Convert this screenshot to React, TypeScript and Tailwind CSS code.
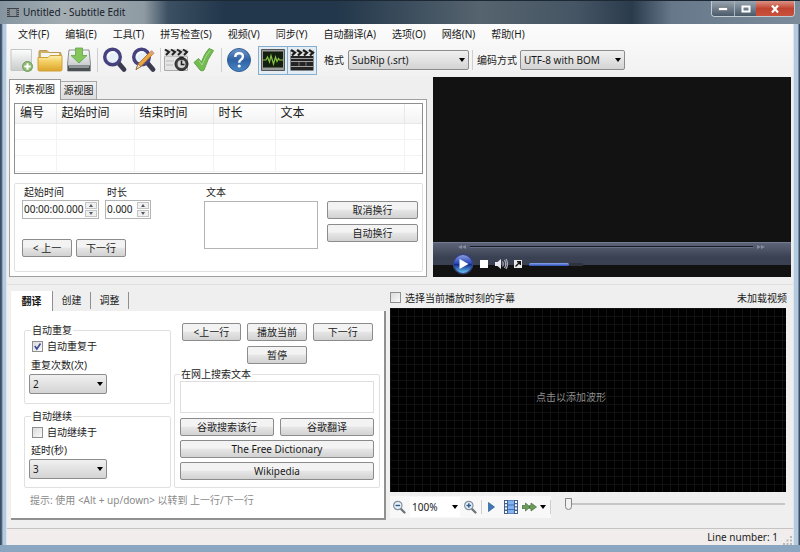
import { useState } from 'react';
import type { ReactNode } from 'react';
import clsx from 'clsx';

const MENUS = [
  '文件(F)',
  '编辑(E)',
  '工具(T)',
  '拼写检查(S)',
  '视频(V)',
  '同步(Y)',
  '自动翻译(A)',
  '选项(O)',
  '网络(N)',
  '帮助(H)',
];

const TABS = ['翻译', '创建', '调整'];

/* ---------- icons ---------- */

function NewIcon() {
  return (
    <svg width="24" height="26" viewBox="0 0 24 26">
      <defs>
        <linearGradient id="page" x1="0" y1="0" x2="0" y2="1">
          <stop offset="0" stopColor="#fdfdfd" />
          <stop offset="1" stopColor="#c9ccca" />
        </linearGradient>
      </defs>
      <path d="M1 2.500h20.500v21H1z" fill="url(#page)" stroke="#c3c7c3" />
      <circle cx="17.500" cy="19.500" r="5" fill="#8fb873" stroke="#6f9f5a" />
      <path d="M17.500 16.300v6.400M14.300 19.500h6.400" stroke="#fff" strokeWidth="2" />
    </svg>
  );
}

function OpenIcon() {
  return (
    <svg width="26" height="26" viewBox="0 0 26 26">
      <defs>
        <linearGradient id="folder" x1="0" y1="0" x2="0" y2="1">
          <stop offset="0" stopColor="#fdf0b4" />
          <stop offset="0.400" stopColor="#f3cf62" />
          <stop offset="1" stopColor="#dca42c" />
        </linearGradient>
      </defs>
      <path d="M2 10V4.500q0-1 1-1h7l2 2h11q1 0 1 1V12H2z" fill="#cdb065" stroke="#b89a55" />
      <path d="M4 6h18v6H4z" fill="#f4f4f0" />
      <path d="M1 10.500h10l2-2h12v14q0 1.500-1.500 1.500h-21Q1 24 1 22.500z" fill="url(#folder)" stroke="#cfa03a" />
    </svg>
  );
}

function SaveIcon() {
  return (
    <svg width="26" height="26" viewBox="0 0 26 26">
      <defs>
        <linearGradient id="drive" x1="0" y1="0" x2="0" y2="1">
          <stop offset="0" stopColor="#fafafa" />
          <stop offset="1" stopColor="#b8bcbf" />
        </linearGradient>
      </defs>
      <path d="M3 3h20l1.500 14v7h-23v-7z" fill="url(#drive)" stroke="#8c9092" />
      <path d="M2 18.500h22V24H2z" fill="#4b5053" />
      <path d="M3 19h20v2H3z" fill="#8f9598" />
      <path d="M9.500 1h7v7.500H21L13 16 5 8.500h4.500z" fill="#84c65c" stroke="#5fa343" strokeWidth="0.800" />
    </svg>
  );
}

function Lens() {
  return (
    <>
      <path d="M16 15.500l6 7" stroke="#3c3a50" strokeWidth="4.800" strokeLinecap="round" />
      <circle cx="10.500" cy="10" r="7.800" fill="#e7eff8" stroke="#46427e" strokeWidth="3.400" />
      <path d="M6 9.500a5 5 0 0 1 7-4" fill="none" stroke="#fff" strokeWidth="1.600" />
    </>
  );
}

function FindIcon() {
  return (
    <svg width="26" height="26" viewBox="0 0 26 26">
      <Lens />
    </svg>
  );
}

function ReplaceIcon() {
  return (
    <svg width="26" height="26" viewBox="0 0 26 26">
      <Lens />
      <path d="M5 22.500L7 17 19.500 4.500q2-1 3.500 1.500L10 19.500z" fill="#eba643" stroke="#a86d22" strokeWidth="0.800" />
      <path d="M5 22.500L7 17l3 2.500z" fill="#f7dfb6" stroke="#6b512e" strokeWidth="0.600" />
      <path d="M18.500 5.500l3.500 2.500 1.500-2-3-3z" fill="#d9a08a" />
    </svg>
  );
}

function ClapClockIcon() {
  return (
    <svg width="26" height="26" viewBox="0 0 26 26">
      <path d="M1.500 9.500h23v14h-23z" fill="#e4e4e4" stroke="#aaa" />
      <path d="M1.500 2h23v7.500h-23z" fill="#d8d8d8" />
      <path d="M2 2.500l4 2.500-3 3M8 2.500L12 5 9 8M14 2.500L18 5l-3 3M20 2.500L24 5l-3 3" fill="none" stroke="#222" strokeWidth="2" />
      <path d="M3 14h8M3 18h7" stroke="#bbb" />
      <circle cx="18.500" cy="17" r="6.500" fill="#3c3c3c" stroke="#222" />
      <circle cx="18.500" cy="17" r="4" fill="#d6d6d6" />
      <path d="M18.500 13.500v4h3" stroke="#222" strokeWidth="1.600" fill="none" />
      <path d="M16.500 10.500h4" stroke="#222" strokeWidth="2" />
    </svg>
  );
}

function CheckIcon() {
  return (
    <svg width="22" height="26" viewBox="0 0 22 26">
      <path d="M1 15.500l4.500-4 3 3.500Q11 7 16 1.500l4.500 2Q14.500 12 11 23q-2 1.800-4 0z" fill="#74bb52" stroke="#62a645" />
      <path d="M17 3.500Q12 9 9 18L5.800 13.500" fill="none" stroke="#a4d888" />
    </svg>
  );
}

function HelpIcon() {
  return (
    <svg width="26" height="26" viewBox="0 0 26 26">
      <defs>
        <linearGradient id="help" x1="0" y1="0" x2="0" y2="1">
          <stop offset="0" stopColor="#6d97c9" />
          <stop offset="0.500" stopColor="#2e62a3" />
          <stop offset="1" stopColor="#4a86c4" />
        </linearGradient>
      </defs>
      <circle cx="13" cy="13" r="11.500" fill="url(#help)" stroke="#345f92" />
      <path d="M9.300 10q0-3.800 3.800-3.800t3.800 3.300q0 2-2 3.200-1.700 1-1.700 3" fill="none" stroke="#fff" strokeWidth="2.400" />
      <circle cx="13.200" cy="19" r="1.600" fill="#fff" />
    </svg>
  );
}

function WaveIcon() {
  return (
    <svg width="26" height="24" viewBox="0 0 26 24">
      <path d="M1.500 1.500h23v21h-23z" fill="#9a9d9c" stroke="#555" />
      <path d="M3 3.500h20v16H3z" fill="#14200f" />
      <path d="M3 12h3l1.500-3 2 5L11 7.500l2.500 8.500 2-7 1.500 4.500 1.500-3 1 1.500H23" fill="none" stroke="#86c245" strokeWidth="1.200" />
    </svg>
  );
}

function ClapIcon() {
  return (
    <svg width="26" height="24" viewBox="0 0 26 24">
      <path d="M1.500 2h23v20.500h-23z" fill="#242424" />
      <path d="M1.500 1.500h23v6.500h-23z" fill="#e2e2e2" />
      <path d="M2 2l4 2.600-3 2.900M8 2l4 2.600-3 2.900M14 2l4 2.600-3 2.900M20 2l4 2.600-3 2.900" fill="none" stroke="#1b1b1b" strokeWidth="2.200" />
      <path d="M2 10.500h22M2 13.500h22M2 18.500h22" stroke="#a2a2a2" />
      <path d="M10 14v4M17 14v4" stroke="#777" />
    </svg>
  );
}

function ZoomGlyph({ plus }: { plus?: boolean }) {
  return (
    <svg width="14" height="14" viewBox="0 0 14 14">
      <path d="M9 9l3.500 3.500" stroke="#6b7178" strokeWidth="2.200" strokeLinecap="round" />
      <circle cx="5.800" cy="5.500" r="4.200" fill="#e6f1f8" stroke="#84919c" strokeWidth="1.200" />
      <path d={plus ? 'M3.500 5.500h4.600M5.800 3.200v4.600' : 'M3.500 5.500h4.600'} stroke="#2b5a8c" strokeWidth="1.400" />
    </svg>
  );
}

function Caret({ className }: { className?: string }) {
  return (
    <svg width="6" height="4" viewBox="0 0 6 4" className={className}>
      <path d="M0 0h6L3 4z" fill="#000" />
    </svg>
  );
}

/* ---------- controls ---------- */

function Button({ children, className }: { children: ReactNode; className?: string }) {
  return (
    <button
      type="button"
      className={clsx(
        'flex h-[18px] items-center justify-center whitespace-nowrap rounded-xs border border-[#8c8c8c] bg-linear-to-b from-[#f3f3f3] from-45% via-[#e6e6e6] via-50% to-[#d2d2d2]',
        className,
      )}
    >
      {children}
    </button>
  );
}

interface SelectProps {
  id: string;
  options: string[];
  className?: string;
}

function Select({ id, options, className }: SelectProps) {
  return (
    <span className={clsx('relative block h-5', className)}>
      <select
        id={id}
        className="block h-full w-full appearance-none rounded-xs border border-[#8c8c8c] bg-linear-to-b from-[#f0f0f0] to-[#d4d4d4] pr-4 pl-[3px]"
      >
        {options.map((o) => (
          <option key={o}>{o}</option>
        ))}
      </select>
      <Caret className="pointer-events-none absolute top-2 right-1" />
    </span>
  );
}

function Spinner({ id, value, className }: { id: string; value: string; className?: string }) {
  return (
    <span className={clsx('flex h-[19px] items-center border border-[#b4b4b4] bg-[#fdfdfd] pr-px', className)}>
      <input id={id} defaultValue={value} className="w-0 min-w-0 flex-1 pl-px outline-none" />
      <span className="flex w-3 flex-col gap-px">
        <button type="button" aria-label="增加" className="flex h-[7px] items-center justify-center border border-[#c4c4c4] bg-[#f0f0f0]">
          <svg width="4" height="3" viewBox="0 0 4 3"><path d="M0 3h4L2 0z" fill="#556" /></svg>
        </button>
        <button type="button" aria-label="减少" className="flex h-[7px] items-center justify-center border border-[#c4c4c4] bg-[#f0f0f0]">
          <svg width="4" height="3" viewBox="0 0 4 3"><path d="M0 0h4L2 3z" fill="#556" /></svg>
        </button>
      </span>
    </span>
  );
}

function CheckBox({ id, checked = false, children }: { id: string; checked?: boolean; children: ReactNode }) {
  const [on, setOn] = useState(checked);
  return (
    <label htmlFor={id} className="flex items-center gap-1">
      <span className="relative block size-[11px]">
        <input
          id={id}
          type="checkbox"
          checked={on}
          onChange={(e) => setOn(e.target.checked)}
          className="block size-[11px] appearance-none border border-[#8e8f8f] bg-linear-to-br from-[#dcdcdc] to-[#fafafa]"
        />
        {on && (
          <svg width="11" height="11" viewBox="0 0 11 11" className="pointer-events-none absolute inset-0">
            <path d="M2.800 5l2 3L8.500 2.500" fill="none" stroke="#3b4a94" strokeWidth="1.600" />
          </svg>
        )}
      </span>
      {children}
    </label>
  );
}

function Divider({ className }: { className?: string }) {
  return <span className={clsx('w-px bg-[#cfcfcf]', className)} />;
}

/* ---------- window parts ---------- */

function TitleBar() {
  return (
    <header className="flex h-6 items-center border-t border-[#1c2833] bg-[linear-gradient(to_right,#8595a0,#a3adb2_8%,#8f9ba3_18%,#3c5063_21%,#22374b_28%,#22374b_42%,#56646f_60%,#465564_72%,#2a3b4c_79%,#66788a_84%,#7b8b9a)] pl-[7px]">
      <svg width="12" height="9" viewBox="0 0 12 9">
        <path d="M0 0h12v9H0z" fill="#3d4348" />
        <path d="M2.500 1h7v7h-7z" fill="#8b9298" />
        <path d="M1 1v7M11 1v7" stroke="#ccc" strokeDasharray="1 1" />
      </svg>
      <h1 className="ml-1 text-[#16202a]">Untitled - Subtitle Edit</h1>
      <div className="mr-[5px] ml-auto flex h-4 self-start overflow-hidden rounded-b-sm border border-t-0 border-[#c3cbd2]">
        <button type="button" aria-label="最小化" className="flex w-[23px] items-center justify-center border-r border-[#aab4bd] bg-linear-to-b from-[#9aa6b1] to-[#4b5a69]">
          <svg width="10" height="4" viewBox="0 0 10 4"><path d="M.5 .5h9v3h-9z" fill="#fff" stroke="#555" strokeWidth="0.500" /></svg>
        </button>
        <button type="button" aria-label="最大化" className="flex w-[21px] items-center justify-center bg-linear-to-b from-[#9aa6b1] to-[#4b5a69]">
          <svg width="10" height="8" viewBox="0 0 10 8"><path d="M1.500 1.500h7v5h-7z" fill="none" stroke="#fff" strokeWidth="2" /></svg>
        </button>
        <button type="button" aria-label="关闭" className="flex w-[38px] items-center justify-center bg-linear-to-b from-[#dc9184] via-[#c04431] via-50% to-[#c9523c]">
          <svg width="10" height="8" viewBox="0 0 10 8"><path d="M2 .5l6 7M8 .5l-6 7" stroke="#fff" strokeWidth="2.200" /></svg>
        </button>
      </div>
    </header>
  );
}

function Toolbar() {
  return (
    <div className="flex h-8 items-center pl-[3px]">
      <button type="button" aria-label="新建"><NewIcon /></button>
      <button type="button" aria-label="打开" className="ml-[3px]"><OpenIcon /></button>
      <button type="button" aria-label="保存" className="ml-[3px]"><SaveIcon /></button>
      <Divider className="mr-1 ml-[5px] h-6" />
      <button type="button" aria-label="查找"><FindIcon /></button>
      <button type="button" aria-label="替换" className="ml-[3px]"><ReplaceIcon /></button>
      <Divider className="mr-0.5 ml-[3px] h-6" />
      <button type="button" aria-label="视觉同步"><ClapClockIcon /></button>
      <button type="button" aria-label="拼写检查" className="ml-1"><CheckIcon /></button>
      <Divider className="mr-1 ml-1.5 h-6" />
      <button type="button" aria-label="帮助"><HelpIcon /></button>
      <button type="button" aria-label="波形" aria-pressed="true" className="ml-1.5 flex h-[29px] w-[30px] items-center justify-center border border-[#86aecd] bg-[#e2ecf4]">
        <WaveIcon />
      </button>
      <button type="button" aria-label="视频" aria-pressed="true" className="-ml-px flex h-[29px] w-[30px] items-center justify-center border border-[#86aecd] bg-[#e2ecf4]">
        <ClapIcon />
      </button>
      <label htmlFor="format" className="ml-[7px] w-6">格式</label>
      <Select id="format" options={['SubRip (.srt)', 'WebVTT (.vtt)']} className="w-[121px]" />
      <Divider className="mr-1 ml-[3px] h-5" />
      <label htmlFor="encoding" className="w-[43px]">编码方式</label>
      <Select id="encoding" options={['UTF-8 with BOM', 'UTF-8']} className="w-[105px]" />
    </div>
  );
}

function ListView() {
  return (
    <section className="flex flex-col pt-0.5">
      <div role="tablist" className="flex items-end">
        <button type="button" role="tab" aria-selected="true" className="z-10 -mb-px h-[21px] w-[52px] border border-b-0 border-[#999] bg-white pb-0.5">
          列表视图
        </button>
        <button type="button" role="tab" aria-selected="false" className="h-[18px] w-9 border border-b-0 border-l-0 border-[#a8a8a8] bg-linear-to-b from-[#f0f0f0] to-[#dcdcdc]">
          源视图
        </button>
      </div>
      <div className="flex flex-1 flex-col gap-[9px] border border-[#a0a0a0] bg-white pt-[3px] pr-[3px] pb-1 pl-1">
        <div className="h-[71px] border border-[#8f8f8f] bg-white">
          <table className="w-full table-fixed border-collapse text-left text-xs">
            <colgroup>
              <col className="w-[41px]" />
              <col className="w-[78px]" />
              <col className="w-[79px]" />
              <col className="w-[62px]" />
              <col />
              <col className="w-[18px]" />
            </colgroup>
            <thead>
              <tr className="h-[19px] bg-linear-to-b from-white to-[#f3f3f3]">
                {['编号', '起始时间', '结束时间', '时长', '文本', ''].map((h) => (
                  <th key={h} className="border-r border-b border-[#e8e8e8] py-0 pl-[5px] leading-4 font-normal last:border-r-0">
                    {h}
                  </th>
                ))}
              </tr>
            </thead>
            <tbody>
              {[0, 1, 2].map((row) => (
                <tr key={row} className="h-4">
                  {[0, 1, 2, 3, 4, 5].map((col) => (
                    <td key={col} className="border-r border-b border-[#f3f3f3] p-0 last:border-r-0" />
                  ))}
                </tr>
              ))}
            </tbody>
          </table>
        </div>
        <div className="flex flex-1 justify-between rounded-xs border border-[#e0e0e0] pr-1 pb-3.5 pl-[7px]">
          <div className="flex flex-col">
            <div className="flex gap-1.5">
              <div className="flex flex-col">
                <label htmlFor="start" className="h-4 pl-0.5 leading-4">起始时间</label>
                <Spinner id="start" value="00:00:00.000" className="w-[77px]" />
              </div>
              <div className="flex flex-col">
                <label htmlFor="duration" className="h-4 pl-0.5 leading-4">时长</label>
                <Spinner id="duration" value="0.000" className="w-[46px]" />
              </div>
            </div>
            <div className="mt-auto flex gap-1">
              <Button className="w-[50px]">&lt; 上一</Button>
              <Button className="w-[50px]">下一行</Button>
            </div>
          </div>
          <div className="flex gap-[9px]">
            <div className="flex flex-col">
              <label htmlFor="text" className="h-[17px] pl-0.5 leading-4">文本</label>
              <textarea id="text" className="h-12 w-[114px] resize-none border border-[#b4b4b4] bg-white" />
            </div>
            <div className="flex flex-col gap-[5px] pt-[17px]">
              <Button className="w-[91px]">取消换行</Button>
              <Button className="w-[91px]">自动换行</Button>
            </div>
          </div>
        </div>
      </div>
    </section>
  );
}

function VideoPlayer() {
  return (
    <section className="flex flex-col bg-[#121212]">
      <div className="flex-1" />
      <div className="flex h-[35px] flex-col border-t border-[#727b93] bg-linear-to-b from-[#5d6478] to-[#3a4152] to-65% [background-size:100%_22px] bg-no-repeat pr-[26px] pl-[25px]">
        <div className="flex h-2 items-center gap-1">
          <svg width="8" height="4" viewBox="0 0 8 4"><path d="M4 0v4L0 2zM8 0v4L4 2z" fill="#858ca0" /></svg>
          <span className="h-0.5 flex-1 border-t border-[#161b2a] bg-[#6a7288]" />
          <svg width="8" height="4" viewBox="0 0 8 4"><path d="M0 0v4l4-2zM4 0v4l4-2z" fill="#858ca0" /></svg>
        </div>
        <div className="-ml-[7px] flex h-[26px] items-center pl-px">
          <button type="button" aria-label="播放">
            <svg width="22" height="22" viewBox="0 0 22 22">
              <defs>
                <linearGradient id="play" x1="0" y1="0" x2="0" y2="1">
                  <stop offset="0" stopColor="#93a4e4" />
                  <stop offset="0.480" stopColor="#2545b5" />
                  <stop offset="0.520" stopColor="#102a8c" />
                  <stop offset="1" stopColor="#6fd4fa" />
                </linearGradient>
              </defs>
              <circle cx="11" cy="11" r="9.700" fill="url(#play)" stroke="#35427c" strokeWidth="1.400" />
              <path d="M7.500 6l9 5-9 5z" fill="#fff" />
            </svg>
          </button>
          <button type="button" aria-label="停止" className="ml-1.5 size-2 bg-white" />
          <button type="button" aria-label="静音" className="ml-[7px]">
            <svg width="13" height="12" viewBox="0 0 13 12">
              <path d="M0 4h2.500L6 1v10L2.500 8H0z" fill="#e8e8ee" />
              <path d="M7.500 3.500q1.500 2.500 0 5M9.500 2q2.500 4 0 8M11 1q3 5 0 10" fill="none" stroke="#aab" strokeWidth="1.200" />
            </svg>
          </button>
          <button type="button" aria-label="全屏" className="ml-1.5">
            <svg width="8" height="8" viewBox="0 0 8 8">
              <path d="M0 0h8v8H0z" fill="#e9e9e9" />
              <path d="M1.500 6.500l4.500-4.500M3 1.700h3.300V5" fill="none" stroke="#111" strokeWidth="1.400" />
            </svg>
          </button>
          <span className="ml-[7px] flex h-[3px] w-[54px] bg-[#30333d]">
            <span className="w-10 rounded-sm bg-linear-to-b from-[#8ca6ea] to-[#2a4cb5]" />
          </span>
        </div>
      </div>
    </section>
  );
}

function TranslatePanel() {
  const [tab, setTab] = useState(TABS[0]);
  return (
    <section className="flex flex-col">
      <div role="tablist" className="flex h-5 items-stretch">
        {TABS.map((t) => (
          <button
            key={t}
            type="button"
            role="tab"
            aria-selected={tab === t}
            onClick={() => setTab(t)}
            className={clsx(
              'w-[38px] border-r border-[#8f8f8f] first:w-[42px]',
              tab === t ? 'bg-white font-bold' : 'mt-px mb-0.5',
            )}
          >
            {t}
          </button>
        ))}
      </div>
      <div className="flex flex-1 flex-col border-r-2 border-b-2 border-[#909090] bg-white pr-1 pl-[13px]">
        <div className="flex gap-[3px] pt-3">
          <div className="flex w-[147px] flex-col gap-[5px]">
            <fieldset className="h-[81px] rounded-xs border border-[#e0e0e0] pl-1">
              <legend className="ml-0.5 h-3.5 px-px leading-3.5">自动重复</legend>
              <div className="pl-[3px] leading-[18px]">
                <CheckBox id="repeat" checked>自动重复于</CheckBox>
              </div>
              <label htmlFor="repeat-count" className="block h-[19px] pl-0.5 leading-5">重复次数(次)</label>
              <Select id="repeat-count" options={['2', '3', '4']} className="w-[78px]" />
            </fieldset>
            <fieldset className="h-[79px] rounded-xs border border-[#e0e0e0] pl-1">
              <legend className="ml-0.5 h-3.5 px-px leading-3.5">自动继续</legend>
              <div className="pl-[3px] leading-[18px]">
                <CheckBox id="continue">自动继续于</CheckBox>
              </div>
              <label htmlFor="delay" className="block h-[18px] pl-0.5 leading-[18px]">延时(秒)</label>
              <Select id="delay" options={['3', '4', '5']} className="w-[78px]" />
            </fieldset>
          </div>
          <div className="flex flex-1 flex-col">
            <div className="grid w-[191px] grid-cols-3 gap-x-1.5 gap-y-[5px] self-center">
              <Button>&lt;上一行</Button>
              <Button>播放当前</Button>
              <Button>下一行</Button>
              <Button className="col-start-2">暂停</Button>
            </div>
            <fieldset className="mt-[3px] flex h-[121px] flex-col rounded-xs border border-[#e0e0e0] px-[5px]">
              <legend className="h-3.5 px-px leading-3.5">在网上搜索文本</legend>
              <textarea aria-label="在网上搜索文本" className="h-8 resize-none border border-[#dedede]" />
              <div className="mt-[5px] grid grid-cols-2 gap-x-1.5 gap-y-1">
                <Button>谷歌搜索该行</Button>
                <Button>谷歌翻译</Button>
                <Button className="col-span-2">The Free Dictionary</Button>
                <Button className="col-span-2">Wikipedia</Button>
              </div>
            </fieldset>
          </div>
        </div>
        <p className="mt-1 pb-2 pl-1.5 leading-4 text-[#8a8a8a]">
          提示: 使用 &lt;Alt + up/down&gt; 以转到 上一行/下一行
        </p>
      </div>
    </section>
  );
}

function WaveformPanel() {
  return (
    <section className="flex min-w-0 flex-col">
      <div className="flex h-[17px] items-center justify-between pr-1 pb-1 leading-4">
        <CheckBox id="follow">选择当前播放时刻的字幕</CheckBox>
        <span>未加载视频</span>
      </div>
      <div className="mr-[5px] flex flex-1 items-center justify-center bg-black bg-[linear-gradient(to_right,#121212_1px,transparent_1px),linear-gradient(to_bottom,#101010_1px,transparent_1px)] bg-[size:8px_8px] pr-[34px] pb-1.5 text-[#8c8c8c]">
        点击以添加波形
      </div>
      <div className="flex h-7 items-center pr-1.5 pt-0.5">
        <div className="flex h-[22px] items-center bg-[#f8f8f8] pl-0.5">
          <button type="button" aria-label="缩小"><ZoomGlyph /></button>
          <button type="button" className="ml-1 flex h-5 w-[50px] items-center justify-between bg-white pr-0.5 pl-0.5">
            100%
            <Caret />
          </button>
          <button type="button" aria-label="放大" className="ml-[3px]"><ZoomGlyph plus /></button>
          <Divider className="ml-1 h-3.5" />
          <button type="button" aria-label="播放所选" className="ml-1.5">
            <svg width="7" height="10" viewBox="0 0 7 10"><path d="M.5 .5L6.500 5l-6 4.500z" fill="#3e78b8" stroke="#2a5c94" strokeWidth="0.700" /></svg>
          </button>
          <button type="button" aria-label="胶片" className="ml-[9px]">
            <svg width="14" height="14" viewBox="0 0 14 14">
              <path d="M0 0h14v14H0z" fill="#43618e" />
              <path d="M4 .5h6v13H4z" fill="#82b2f0" />
              <path d="M2 1v12M12 1v12" stroke="#fff" strokeWidth="2" strokeDasharray="2 1.300" />
              <path d="M4 5h6M4 9.500h6" stroke="#3f6fc0" />
            </svg>
          </button>
          <button type="button" aria-label="跳转" className="ml-1 flex items-center gap-[3px]">
            <svg width="15" height="10" viewBox="0 0 15 10">
              <path d="M0 3.500h3.500V1L8 5 3.500 9V6.500H0zM7.500 3.500H9V1l5.500 4L9 9V6.500H7.500z" fill="#6b9c5a" stroke="#466f3a" strokeWidth="0.700" />
            </svg>
            <Caret />
          </button>
          <Divider className="ml-1 h-3.5" />
        </div>
        <input
          type="range"
          aria-label="位置"
          defaultValue={0}
          className="mb-1.5 ml-3.5 h-3.5 min-w-0 flex-1 appearance-none bg-transparent [&::-webkit-slider-runnable-track]:h-0.5 [&::-webkit-slider-runnable-track]:bg-[#c6c6c6] [&::-webkit-slider-thumb]:-mt-[5px] [&::-webkit-slider-thumb]:h-3 [&::-webkit-slider-thumb]:w-[7px] [&::-webkit-slider-thumb]:appearance-none [&::-webkit-slider-thumb]:rounded-b-sm [&::-webkit-slider-thumb]:border [&::-webkit-slider-thumb]:border-[#858585] [&::-webkit-slider-thumb]:bg-[#f2f2f2]"
        />
      </div>
    </section>
  );
}

export default function App() {
  return (
    <div className="flex min-h-screen flex-col bg-[#a9c0d8] font-['Noto_Sans','Noto_Sans_CJK_SC',sans-serif] text-[10px] text-[#1a1a1a]">
      <TitleBar />
      <div className="flex flex-1 border-b-[7px] border-[#8ba6c1]">
        <div className="w-[7px] border-r border-[#dce6f0] bg-linear-to-r from-[#3c4f64] from-20% to-[#b4cade] to-50%" />
        <main className="flex min-w-0 flex-1 flex-col bg-[#efefef]">
          <div className="bg-linear-to-b from-[#fcfcfc] to-[#f1f1f1]">
            <nav className="flex h-5 items-center gap-4 pl-[11px]">
              {MENUS.map((m) => (
                <button key={m} type="button" className="whitespace-nowrap">{m}</button>
              ))}
            </nav>
            <Toolbar />
          </div>
          <div className="grid h-[201px] grid-cols-[418px_minmax(0,1fr)] gap-x-1.5 pt-px pr-0.5 pl-0.5">
            <ListView />
            <VideoPlayer />
          </div>
          <div className="mt-[7px] border-t border-[#e0e0e0]" />
          <div className="grid flex-1 grid-cols-[375px_minmax(0,1fr)] gap-x-1 pt-1.5 pr-0.5 pb-2 pl-1">
            <TranslatePanel />
            <WaveformPanel />
          </div>
          <footer className="flex h-[17px] items-center justify-end gap-1 border-t border-[#c4c4c4] bg-[#f1eded] pr-px">
            <span>Line number: 1</span>
            <svg width="10" height="10" viewBox="0 0 10 10" className="self-end">
              <path d="M8 1h2v2H8zM8 4.500h2v2H8zM4.500 4.500h2v2h-2zM8 8h2v2H8zM4.500 8h2v2h-2zM1 8h2v2H1z" fill="#b8b8b8" />
            </svg>
          </footer>
        </main>
        <div className="w-[7px] border-l border-[#dce6f0] bg-linear-to-l from-[#3c4f64] from-10% to-[#b4cade] to-40%" />
      </div>
    </div>
  );
}
